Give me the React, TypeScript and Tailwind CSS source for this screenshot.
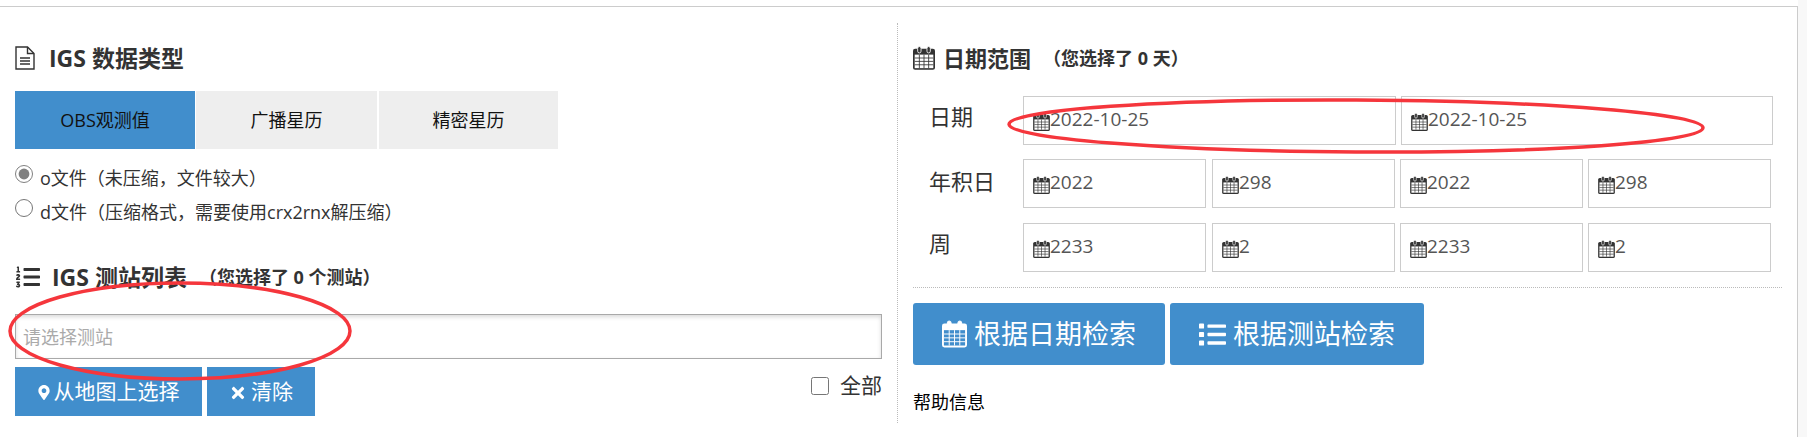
import { FaListOl, FaMapMarkerAlt, FaTimes, FaList } from 'react-icons/fa'

const FONT = "font-['Open_Sans','Noto_Sans_CJK_SC',sans-serif]"

function CalendarIcon({ className }: { className: string }) {
    return (
        <svg viewBox="0 0 26 28" className={className}>
            <rect x="0" y="3" width="26" height="25" rx="2.5" fill="currentColor" />
            <rect x="2" y="10" width="22" height="16" fill="#fff" />
            <path d="M7.5 10v16M13 10v16M18.500 10v16M2 14h22M2 18h22M2 22h22" stroke="currentColor" strokeWidth="1" fill="none" />
            <rect x="5.500" y="0.500" width="4" height="7.500" rx="2" fill="currentColor" stroke="#fff" strokeWidth="1" />
            <rect x="16.500" y="0.500" width="4" height="7.500" rx="2" fill="currentColor" stroke="#fff" strokeWidth="1" />
        </svg>
    )
}

function FileIcon({ className }: { className: string }) {
    return (
        <svg viewBox="0 0 20 24" className={className} fill="none" stroke="currentColor" strokeWidth="1.400">
            <path d="M1 1h11.500l6.500 6.500V23H1z" />
            <path d="M12.500 1v6.500H19" />
            <path d="M5 12h10M5 15h10M5 18h10" />
        </svg>
    )
}

function DateInput({ value, width }: { value: string; width: string }) {
    return (
        <div className={`${width} h-full flex items-center pl-[9px] border border-[#ccc] text-[19px] text-[#555]`}>
            <CalendarIcon className="w-[17px] h-[18px] text-[#333] shrink-0 mt-[2px]" />
            <span className="-mt-[3px]">{value}</span>
        </div>
    )
}

function DateRow({ label, values, labelClass }: { label: string; values: string[]; labelClass: string }) {
    return (
        <div className="flex h-[49px]">
            <div className={`w-[110px] pl-[16px] text-[22px] text-[#333] ${labelClass}`}>{label}</div>
            <div className="flex">
                <DateInput value={values[0]} width="w-[183px]" />
                <DateInput value={values[1]} width="w-[183px] ml-[6px]" />
                <DateInput value={values[2]} width="w-[183px] ml-[5px]" />
                <DateInput value={values[3]} width="w-[183px] ml-[5px]" />
            </div>
        </div>
    )
}

export default function App() {
    return (
        <div className={`relative flex w-[1807px] h-[437px] overflow-hidden bg-white ${FONT}`}>
            <div className="w-[1798px] h-[431px] mt-[6px] flex border-t border-r border-[#ccc]">
                {/* 左侧 */}
                <div className="w-[897px] pl-[15px] pr-[15px] shrink-0">
                    <div className="flex items-center h-[40px] mt-[31px] text-[23px] font-bold text-[#333]">
                        <FileIcon className="w-[20px] h-[24px] mr-[14px]" />
                        IGS 数据类型
                    </div>
                    <div className="flex gap-[1px] mt-[13px] h-[58px] text-[18px] text-[#111]">
                        <div className="w-[180px] flex items-center justify-center bg-[#418ecc]">OBS观测值</div>
                        <div className="w-[181px] flex items-center justify-center bg-[#eee]">广播星历</div>
                        <div className="w-[179px] ml-[1px] flex items-center justify-center bg-[#eee]">精密星历</div>
                    </div>
                    <div className="mt-[10px] text-[18px] text-[#333]">
                        <label className="flex items-center h-[34px] pt-[4px]">
                            <input type="radio" name="t" defaultChecked className="w-[18px] h-[18px] m-0 mr-[7px] -mt-[9px] accent-[#808080]" />
                            o文件（未压缩，文件较大）
                        </label>
                        <label className="flex items-center h-[34px] pt-[4px]">
                            <input type="radio" name="t" className="w-[18px] h-[18px] m-0 mr-[7px] -mt-[9px]" />
                            d文件（压缩格式，需要使用crx2rnx解压缩）
                        </label>
                    </div>
                    <div className="flex items-center h-[36px] mt-[32px] text-[#333]">
                        <FaListOl className="w-[26px] h-[24px] mr-[11px]" />
                        <span className="text-[23px] font-bold">IGS 测站列表</span>
                        <span className="text-[18px] font-bold ml-[12px]">（您选择了 0 个测站）</span>
                    </div>
                    <input
                        placeholder="请选择测站"
                        className="block w-[867px] h-[45px] mt-[19px] px-[7px] border border-[#a9a9a9] shadow-[inset_0_2px_4px_rgba(0,0,0,0.15)] text-[18px] outline-none placeholder:text-[#aaa]"
                    />
                    <div className="flex items-start mt-[8px] text-white text-[21px]">
                        <div className="w-[187px] h-[49px] bg-[#418ecc] flex items-center justify-center">
                            <FaMapMarkerAlt className="w-[12px] h-[15px] mr-[4px] mt-[2px]" />
                            从地图上选择
                        </div>
                        <div className="w-[108px] h-[49px] ml-[5px] bg-[#418ecc] flex items-center justify-center">
                            <FaTimes className="w-[18px] h-[18px] mr-[4px] mt-[2px]" />
                            清除
                        </div>
                        <label className="ml-auto flex items-center text-[21px] text-[#333] mt-[3px]">
                            <input type="checkbox" className="w-[18px] h-[18px] m-0 mr-[11px]" />
                            全部
                        </label>
                    </div>
                </div>
                {/* 右侧 */}
                <div className="w-[885px] h-[400px] mt-[16px] border-l border-dotted border-[#bbb] pl-[15px]">
                    <div className="flex items-center h-[40px] mt-[15px] text-[#333] font-bold">
                        <CalendarIcon className="w-[22px] h-[24px] mr-[8px]" />
                        <span className="text-[22px]">日期范围</span>
                        <span className="text-[18px] ml-[12px]">（您选择了 0 天）</span>
                    </div>
                    <div className="mt-[18px] flex h-[49px] mb-[14px]">
                        <div className="w-[110px] pl-[16px] text-[22px] text-[#333] leading-[40px]">日期</div>
                        <div className="flex gap-[5px]">
                            <DateInput value="2022-10-25" width="w-[373px]" />
                            <DateInput value="2022-10-25" width="w-[372px]" />
                        </div>
                    </div>
                    <div className="flex flex-col gap-[15px]">
                        <DateRow label="年积日" values={['2022', '298', '2022', '298']} labelClass="leading-[44px]" />
                        <DateRow label="周" values={['2233', '2', '2233', '2']} labelClass="leading-[40px]" />
                    </div>
                    <div className="h-0 mt-[15px] border-t border-dotted border-[#bbb]" />
                    <div className="flex gap-[5px] mt-[15px] text-white text-[27px]">
                        <div className="w-[252px] h-[62px] rounded-[3px] bg-[#418ecc] flex items-center justify-center">
                            <CalendarIcon className="w-[25px] h-[30px] mr-[7px] text-white [&_rect:nth-of-type(2)]:fill-[#418ecc]" />
                            根据日期检索
                        </div>
                        <div className="w-[254px] h-[62px] rounded-[3px] bg-[#418ecc] flex items-center justify-center">
                            <FaList className="w-[27px] h-[27px] mr-[7px]" />
                            根据测站检索
                        </div>
                    </div>
                    <div className="mt-[24px] text-[18px] text-black">帮助信息</div>
                </div>
            </div>
            <div className="flex-1 bg-[#f8f8f8]" />

            {/* 红色圈注 */}
            <svg className="absolute left-0 top-0 pointer-events-none" width="1807" height="437">
                <ellipse cx="1356" cy="126" rx="347" ry="26" transform="rotate(0.3 1356 126)" fill="none" stroke="#f5363c" strokeWidth="3.500" />
                <ellipse cx="180" cy="331" rx="170" ry="48" fill="none" stroke="#f5363c" strokeWidth="3.500" />
            </svg>
        </div>
    )
}
